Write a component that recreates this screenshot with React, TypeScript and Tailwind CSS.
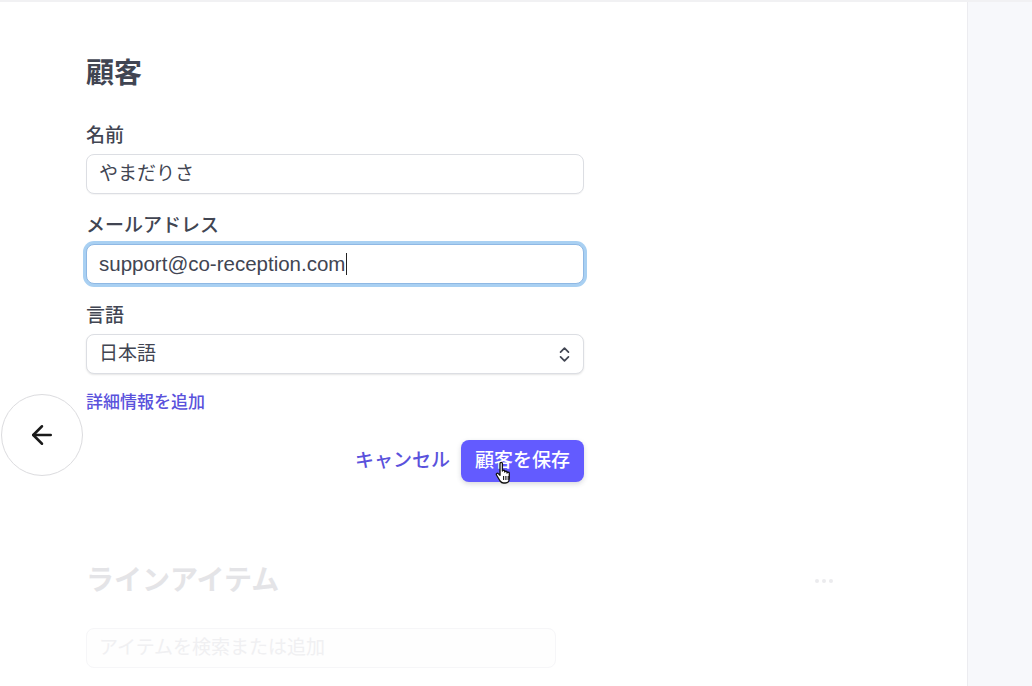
import { ArrowLeft, ChevronsUpDown } from "lucide-react";

const FONT = {
  fontFamily: '"Liberation Sans", "Noto Sans CJK JP", sans-serif',
};

function Field({
  label,
  children,
  first,
}: {
  label: string;
  children: React.ReactNode;
  first?: boolean;
}) {
  return (
    <div className={first ? "mt-[31px]" : "mt-[19px]"}>
      <div className="text-[19px] leading-[26px] font-medium text-[#414552] mb-[5px]">
        {label}
      </div>
      {children}
    </div>
  );
}

function PointerHand() {
  return (
    <svg
      width="22"
      height="26"
      viewBox="0 0 22 26"
      className="absolute left-[33px] top-[20px] pointer-events-none"
    >
      <path
        d="M6 3.5c0-1.4 2.4-1.4 2.4 0V11c0-1 2.3-1 2.3 0v1c0-1 2.3-1 2.3 0v1c0-1 2.3-1 2.3 0v5.5c0 2.5-1.6 4.5-4 4.5H9.5c-1.5 0-2.5-.8-3.4-2L2.5 15c-.8-1.2.8-2.4 1.8-1.4L6 15.3V3.5z"
        fill="#fff"
        stroke="#111"
        strokeWidth="1.3"
        strokeLinejoin="round"
      />
      <path d="M9.6 16v4M11.9 16v4M14.2 16v4" stroke="#111" strokeWidth="1.1" />
    </svg>
  );
}

export default function App() {
  return (
    <div
      className="flex w-[1032px] h-[686px] overflow-hidden bg-white border-t-2 border-[#f1f1f3]"
      style={FONT}
    >
      <main className="relative flex-1 bg-white">
        {/* back */}
        <button
          type="button"
          className="absolute left-[1px] top-[392px] h-[82px] w-[82px] rounded-full bg-white border border-[#dcdcdf] flex items-center justify-center text-[#1a1a1a]"
        >
          <ArrowLeft size={30} strokeWidth={2} />
        </button>

        <div className="ml-[86px] pt-[54px] w-[750px]">
          <div className="w-[498px]">
            <h1 className="text-[28px] leading-[36px] font-bold text-[#414552]">
              顧客
            </h1>

            <Field label="名前" first>
              <div className="h-[40px] rounded-[8px] border border-[#dcdee3] bg-white flex items-center px-[12px] text-[19px] text-[#414552] shadow-[0_1px_1px_rgba(0,0,0,0.04)]">
                やまだりさ
              </div>
            </Field>

            <Field label="メールアドレス">
              <div className="h-[40px] rounded-[8px] border border-[#8fb8e4] bg-white flex items-center px-[12px] text-[20.5px] text-[#414552] ring-[3px] ring-[#a9d0f2]">
                support@co-reception.com
                <span className="inline-block w-px h-[22px] bg-[#222] ml-px" />
              </div>
            </Field>

            <Field label="言語">
              <div className="h-[40px] rounded-[8px] border border-[#dcdee3] bg-white flex items-center justify-between px-[12px] text-[19px] text-[#414552] shadow-[0_1px_2px_rgba(0,0,0,0.1)]">
                日本語
                <ChevronsUpDown size={19} strokeWidth={2.2} className="text-[#414552] -mr-[3px]" />
              </div>
            </Field>

            <div className="mt-[17px] text-[17px] leading-[24px] font-medium text-[#5a52dc]">
              詳細情報を追加
            </div>

            <div className="mt-[25px] flex justify-end items-center gap-[11px]">
              <button
                type="button"
                className="text-[19px] font-medium text-[#5a52dc] px-0"
              >
                キャンセル
              </button>
              <button
                type="button"
                className="relative h-[42px] px-[14px] rounded-[8px] bg-[#635bff] text-white text-[19px] font-medium shadow-[0_2px_5px_rgba(60,66,87,0.2)]"
              >
                顧客を保存
                <PointerHand />
              </button>
            </div>
          </div>

          <div className="mt-[81px] flex items-center justify-between">
            <h2 className="text-[28px] leading-[36px] font-bold text-[#e4e4e7]">
              ラインアイテム
            </h2>
            <div className="flex gap-[3px] mr-[3px]">
              <span className="h-[4px] w-[4px] rounded-full bg-[#ebebee]" />
              <span className="h-[4px] w-[4px] rounded-full bg-[#ebebee]" />
              <span className="h-[4px] w-[4px] rounded-full bg-[#ebebee]" />
            </div>
          </div>

          <div className="mt-[29px] w-[470px] h-[40px] rounded-[8px] border border-[#f6f6f8] bg-[#fefefe] flex items-center px-[12px] text-[19px] text-[#f0f0f2]">
            アイテムを検索または追加
          </div>
        </div>
      </main>

      <aside className="w-[65px] bg-[#f7f8fb] border-l border-[#ececf0] shadow-[-1px_0_2px_rgba(0,0,0,0.03)]" />
    </div>
  );
}
